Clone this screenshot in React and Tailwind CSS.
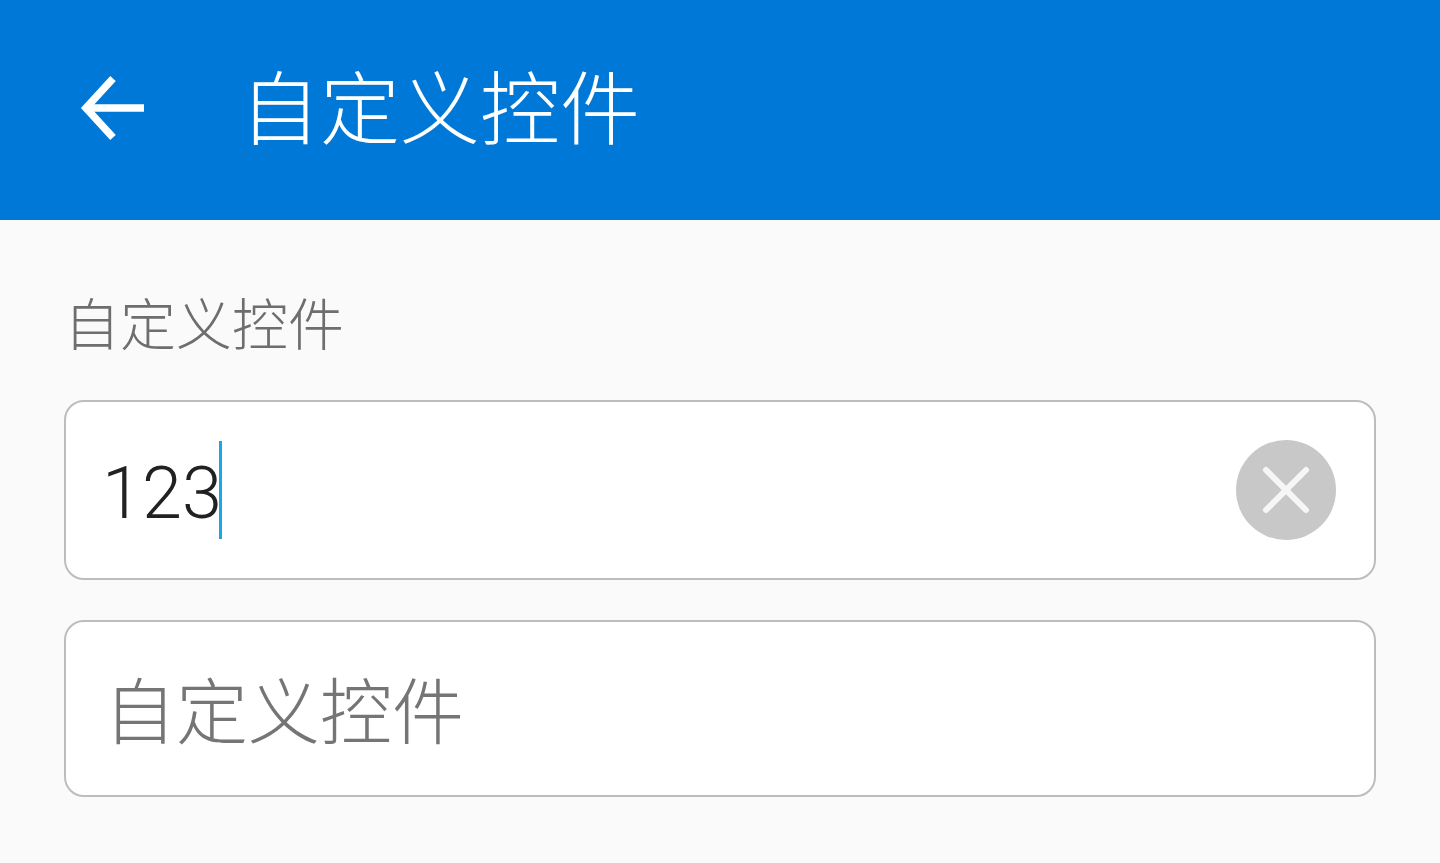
const cjk = "font-['Noto_Sans_CJK_SC','Noto_Sans_CJK_JP',sans-serif]"

function BackArrow() {
  return (
    <svg viewBox="0 0 66 66" className="h-[66px] w-[66px] text-white" fill="none" stroke="currentColor" strokeWidth="7.500">
      <path d="M64 33H5" />
      <path d="M33 3.500 6 33l27 29.500" />
    </svg>
  )
}

function ClearButton() {
  return (
    <span className="flex h-[100px] w-[100px] shrink-0 items-center justify-center rounded-full bg-[#c8c8c8]">
      <svg viewBox="0 0 48 48" className="h-12 w-12" fill="none" stroke="#f6f6f6" strokeWidth="6" strokeLinecap="round">
        <path d="M4 4l40 40" />
        <path d="M44 4 4 44" />
      </svg>
    </span>
  )
}

export default function App() {
  return (
    <div className="h-[863px] w-[1440px] overflow-hidden bg-[#fafafa]">
      <header className="flex h-[220px] items-start bg-[#0078d7] pl-[80px] pt-[75px]">
        <BackArrow />
        <h1 className={`ml-[94px] mt-[-20px] text-[80px] leading-[96px] font-light text-white ${cjk}`}>自定义控件</h1>
      </header>

      <main className="px-16">
        <div className={`flex h-[180px] items-center text-[56px] leading-none font-light text-[#6e6e6e] ${cjk}`}>
          <span className="mt-[21px]">自定义控件</span>
        </div>

        <div className="flex h-[180px] items-center justify-between rounded-[20px] border-2 border-[#bdbdbd] bg-white pl-[36px] pr-[38px]">
          <div className="flex h-[98px] items-center">
            <span className="mt-[7px] w-[117px] font-['Roboto',sans-serif] text-[72px] leading-none font-light text-[#212121]">123</span>
            <span className="h-[98px] w-[3px] bg-[#18a8e6]" />
          </div>
          <ClearButton />
        </div>

        <div className="mt-10 flex h-[177px] items-center rounded-[20px] border-2 border-[#bdbdbd] bg-white pl-[38px]">
          <span className={`mt-[-4px] text-[72px] leading-none font-light text-[#757575] ${cjk}`}>自定义控件</span>
        </div>
      </main>
    </div>
  )
}
